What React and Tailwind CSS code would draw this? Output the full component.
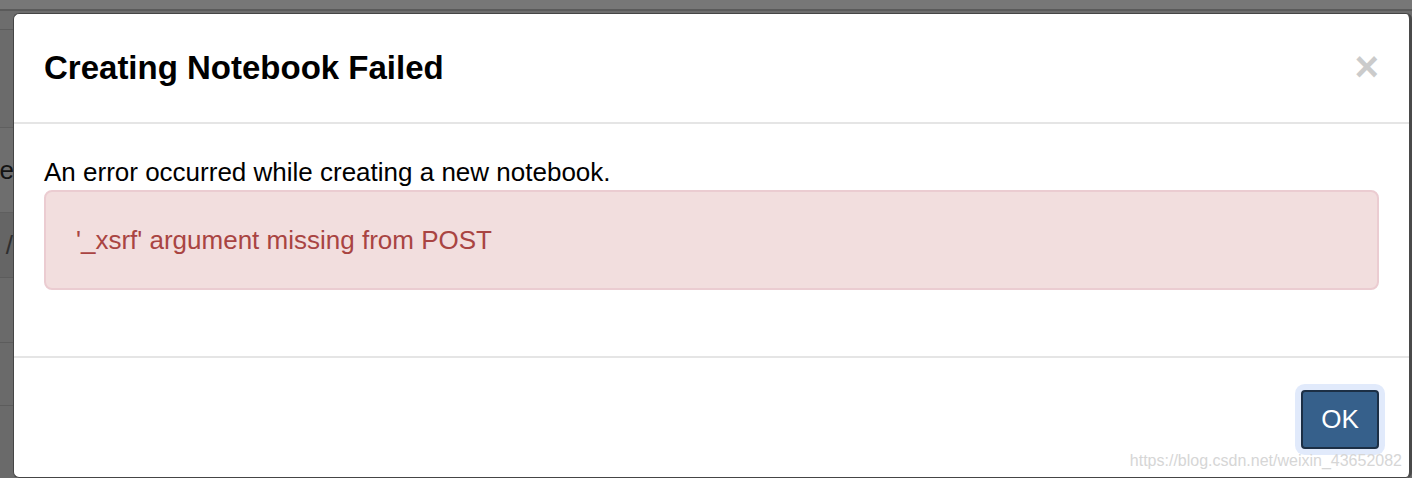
import React from "react";

const font = { fontFamily: '"Liberation Sans", Arial, Helvetica, sans-serif' };

// page behind the backdrop, only its left strip shows
const BackgroundPage = () => (
  <div className="flex h-full w-full flex-col bg-[#6b6b6b]">
    <div className="h-[11px] shrink-0 bg-[#777777] border-b-2 border-[#5a5a5a]" />
    <div className="h-[19px] shrink-0 border-b border-[#5c5c5c] bg-[#6d6d6d]" />
    <div className="h-[98px] shrink-0 border-b border-[#5f5f5f] bg-[#6b6b6b]" />
    <div className="flex h-[85px] shrink-0 items-center border-b border-[#5f5f5f] bg-[#6e6e6e]">
      <div className="flex w-[14px] justify-end overflow-hidden">
        <span className="text-[26px] leading-none text-[#141414]">Name</span>
      </div>
    </div>
    <div className="flex h-[65px] shrink-0 items-center border-b border-[#5c5c5c] bg-[#656565]">
      <div className="flex w-[14px] justify-end overflow-hidden pr-[1px]">
        <span className="text-[26px] leading-none text-[#2e2e2e]">/</span>
      </div>
    </div>
    <div className="h-[65px] shrink-0 border-b border-[#5c5c5c] bg-[#6a6a6a]" />
    <div className="h-[63px] shrink-0 border-b border-[#5c5c5c] bg-[#6a6a6a]" />
    <div className="flex-1 bg-[#6a6a6a]" />
  </div>
);

const App = () => {
  return (
    <div className="relative h-[478px] w-[1412px] overflow-hidden" style={font}>
      <BackgroundPage />

      {/* Modal dialog */}
      <div className="absolute left-[13px] right-0 top-[13px] flex h-[465px] flex-col rounded-[6px] border border-r-[3px] border-[#454545] border-r-[#4a4a4a] bg-white">
        {/* Header */}
        <div className="flex items-start justify-between border-b-2 border-[#e5e5e5] px-[30px] py-[30px]">
          <h4 className="text-[33px] font-bold leading-[48px] text-black">
            Creating Notebook Failed
          </h4>
          <button className="mt-[2px] text-[42px] font-bold leading-none text-black opacity-20">
            ×
          </button>
        </div>

        {/* Body */}
        <div className="px-[30px] py-[30px]">
          <p className="text-[26px] leading-[36px] text-black">
            An error occurred while creating a new notebook.
          </p>
          <div className="mb-[36px] rounded-[8px] border-2 border-[#ebccd1] bg-[#f2dede] px-[30px] py-[30px]">
            <span className="text-[26px] leading-[36px] text-[#a94442]">
              '_xsrf' argument missing from POST
            </span>
          </div>
        </div>

        {/* Footer */}
        <div className="flex flex-1 justify-end border-t-2 border-[#e5e5e5] px-[30px] pt-[32px]">
          <button className="h-[59px] w-[78px] rounded-[4px] border-2 border-[#1c2f45] bg-[#36608b] text-[26px] text-white ring-[6px] ring-[#e1eafb]">
            OK
          </button>
        </div>
      </div>

      {/* Watermark */}
      <div className="absolute bottom-[9px] right-[10px] text-[16px] leading-none text-[#d6d6d6]">
        https://blog.csdn.net/weixin_43652082
      </div>
    </div>
  );
};

export default App;
